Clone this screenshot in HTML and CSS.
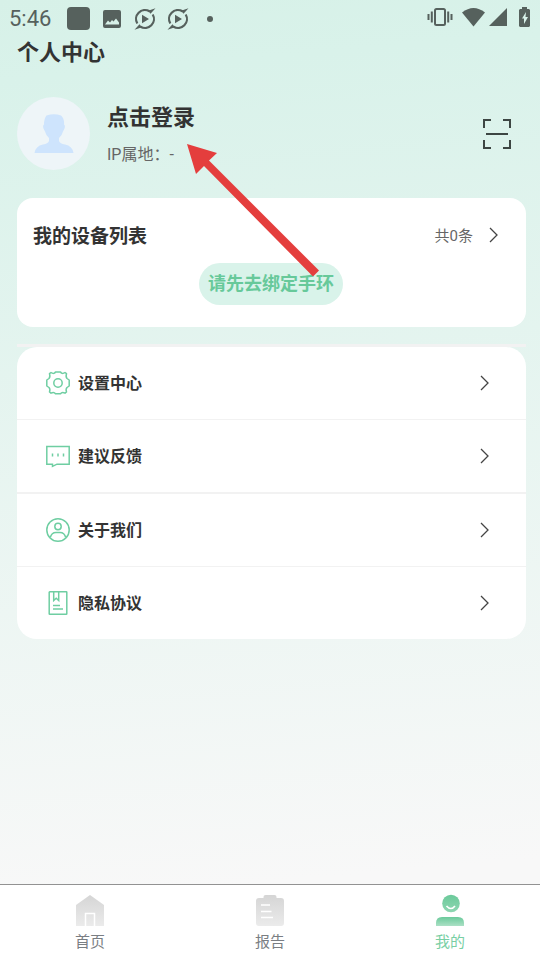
FILE: index.html
```html
<!DOCTYPE html>
<html lang="zh-CN">
<head>
<meta charset="utf-8">
<meta name="viewport" content="width=device-width, initial-scale=1">
<title>个人中心</title>
<link rel="stylesheet" href="styles.css">
</head>
<body>
<div class="status">
  <span class="clock">5:46</span>
  <span class="app-square"></span>
  <svg class="s-image" width="20" height="20" viewBox="0 0 20 20"><path fill="currentColor" fill-rule="evenodd" d="M3 1h14a2 2 0 0 1 2 2v14a2 2 0 0 1-2 2H3a2 2 0 0 1-2-2V3a2 2 0 0 1 2-2zM3 15.500h14v-2l-3-4-2.500 3-1.500-1.500-2 2.500-2-2z"/></svg>
  <svg class="s-play" width="22" height="22" viewBox="0 0 22 22"><path fill="none" stroke="currentColor" stroke-width="2.200" d="M3.300 15.500A8.900 8.900 0 0 1 15.500 3.300M18.700 6.500A8.900 8.900 0 0 1 6.500 18.700"/><path fill="currentColor" d="M8 6.800l7 4.200-7 4.200zM14 2.800l7.500-2.500-5 5.500zM8 19.200L.5 21.700l5-5.500z"/></svg>
  <svg class="s-play" width="22" height="22" viewBox="0 0 22 22"><path fill="none" stroke="currentColor" stroke-width="2.200" d="M3.300 15.500A8.900 8.900 0 0 1 15.500 3.300M18.700 6.500A8.900 8.900 0 0 1 6.500 18.700"/><path fill="currentColor" d="M8 6.800l7 4.200-7 4.200zM14 2.800l7.500-2.500-5 5.500zM8 19.200L.5 21.700l5-5.500z"/></svg>
  <span class="dot"></span>
  <span class="system">
    <svg width="26" height="20" viewBox="0 0 26 20"><rect x="8" y="2" width="10" height="16" rx="1.500" fill="none" stroke="currentColor" stroke-width="2"/><path d="M1.500 7v6M4.800 4.500v11M21.200 4.500v11M24.500 7v6" stroke="currentColor" stroke-width="2"/></svg>
    <svg class="wifi" width="23" height="20" viewBox="0 0 23 20"><path fill="currentColor" d="M0 5.500Q11.500-3.500 23 5.500L11.500 19.500z"/></svg>
    <svg width="19" height="20" viewBox="0 0 19 20"><path fill="currentColor" d="M19 1v18H1z"/></svg>
    <svg class="battery" width="11" height="20" viewBox="0 0 11 20"><path fill="currentColor" fill-rule="evenodd" d="M3 0h5v2h2l1 1v16l-1 1H1l-1-1V3l1-1h2zM7 5l-4 6.500h2V17l4-7H6.500z"/></svg>
  </span>
</div>
<main>
  <h1>个人中心</h1>
  <section class="profile">
    <span class="avatar"><svg width="40" height="40" viewBox="0 0 40 40"><path fill="#cee4fd" d="M12.500 1.500Q20-1 27 1.500q3.500 3 3 9 1.500 1 .5 4l-1.500 3q-1 4-4 6.500v3q1 2.500 6 3.500 7.500 1.500 8.500 8.500H.5q1-7 8.500-8.500 5-1 6-3.500v-3q-3-2.500-4-6.500l-1.500-3q-1-3 .5-4 0-6 2.500-9z"/></svg></span>
    <div class="who">
      <a class="login" href="#login">点击登录</a>
      <p>IP属地：-</p>
    </div>
    <button class="scan" type="button" aria-label="扫一扫"><svg width="28" height="30" viewBox="0 0 28 30"><path d="M1 9V1h7M20 1h7v8M27 21v8h-7M8 29H1v-8M3 15h22" fill="none" stroke="#3d4643" stroke-width="2"/></svg></button>
    <svg class="pointer" width="132" height="134" viewBox="0 0 132 134"><path fill="#e43e3d" d="M0 0l30 9-8 7.500L132 126.500l-6 6L17 22 9 30z"/></svg>
  </section>
  <section class="devices">
    <header>
      <h2>我的设备列表</h2>
      <a href="#devices">共0条<svg width="10" height="16" viewBox="0 0 10 16"><path class="chevron" d="M1 1l7 7-7 7"/></svg></a>
    </header>
    <button class="bind" type="button">请先去绑定手环</button>
  </section>
  <nav class="menu-wrap" aria-label="菜单">
    <ul class="menu">
      <li><a href="#settings">
        <svg class="icon" width="24" height="24" viewBox="0 0 24 24"><path d="M5 1.500q3 2 4.500-.5h5q1.500 2.500 4.500.5l1.500 1.200q-1 3.300.5 4.800l2.200 1.500v6L21 16.500q-1.500 1.500-.5 4.500l-1.500 1.200q-3-1.500-4.500.6h-5q-1.500-2.100-4.500-.6L3.500 21q1-3-.5-4.500L.8 15V9L3 7.500q1.500-1.500.5-4.800z" stroke-linejoin="round"/><circle cx="12" cy="12" r="4.200"/></svg>
        <span>设置中心</span><svg width="10" height="16" viewBox="0 0 10 16"><path class="chevron" d="M1 1l7 7-7 7"/></svg></a></li>
      <li><a href="#feedback">
        <svg class="icon" width="24" height="24" viewBox="0 0 24 24"><path d="M.8 2.500h22.400v17.700H11l-4.500 2.200v-2.200H.8zM6.500 9.500v3M12 9.500v3M17.500 9.500v3"/></svg>
        <span>建议反馈</span><svg width="10" height="16" viewBox="0 0 10 16"><path class="chevron" d="M1 1l7 7-7 7"/></svg></a></li>
      <li><a href="#about">
        <svg class="icon" width="24" height="24" viewBox="0 0 24 24"><circle cx="12" cy="12" r="11.200"/><circle cx="12" cy="8.500" r="3.200"/><path d="M4.300 19.500Q5.500 14.500 10 14.500h4q4.500 0 5.700 5"/></svg>
        <span>关于我们</span><svg width="10" height="16" viewBox="0 0 10 16"><path class="chevron" d="M1 1l7 7-7 7"/></svg></a></li>
      <li><a href="#privacy">
        <svg class="icon" width="24" height="24" viewBox="0 0 24 24"><rect x="3.200" y=".8" width="17.600" height="22.400" rx=".5"/><path d="M7.700 1v8.500l2.500-2.300 2.500 2.300V1M7 14.500h7M7 18h10"/></svg>
        <span>隐私协议</span><svg width="10" height="16" viewBox="0 0 10 16"><path class="chevron" d="M1 1l7 7-7 7"/></svg></a></li>
    </ul>
  </nav>
</main>
<nav class="tabs" aria-label="主导航">
  <a href="#home"><svg width="28" height="32" viewBox="0 0 28 32"><defs><linearGradient id="gray" x2="0" y2="1"><stop stop-color="#d5d5d5"/><stop offset="1" stop-color="#ebebeb"/></linearGradient><linearGradient id="green" gradientUnits="userSpaceOnUse" x1="0" y1="0" x2="0" y2="18"><stop stop-color="#69c999"/><stop offset="1" stop-color="#8ed6b1"/></linearGradient><linearGradient id="greenbody" x2="0" y2="1"><stop stop-color="#6bca9b"/><stop offset="1" stop-color="#abe0c5"/></linearGradient></defs><path fill="url(#gray)" d="M14 1l14 10v21H0V11z"/><path d="M9.500 32V19.500h9V32" fill="none" stroke="#fff" stroke-width="1.500"/></svg>首页</a>
  <a href="#report"><svg width="28" height="32" viewBox="0 0 28 32"><path fill="url(#gray)" d="M9.500 1h9a2 2 0 0 1 2 2v1H25a3 3 0 0 1 3 3v22a3 3 0 0 1-3 3H3a3 3 0 0 1-3-3V7a3 3 0 0 1 3-3h4.500V3a2 2 0 0 1 2-2z"/><path d="M5 11h9M5 17.500h10.500M5 23.500h12" stroke="#fff" stroke-width="1.500"/></svg>报告</a>
  <a class="active" href="#mine" aria-current="page"><svg width="28" height="32" viewBox="0 0 28 32"><circle cx="15" cy="9.500" r="8.800" fill="url(#green)"/><path d="M10.500 12q4.500 5 8.500 0" fill="none" stroke="#fff" stroke-width="1.700"/><path fill="url(#greenbody)" d="M6 23h16q6 0 6 6v3H0v-3q0-6 6-6z"/></svg>我的</a>
</nav>
</body>
</html>
```
FILE: styles.css
```css
* {
  box-sizing: border-box;
}

body {
  margin: 0;
  min-height: 100vh;
  display: flex;
  flex-direction: column;
  background: linear-gradient(175deg, #d7f1e8 0%, #d9f2ea 8%, #f8f8f8 90%);
  color: #333;
  font-family: Roboto, "Noto Sans CJK SC", sans-serif;
}

h1, h2, p, ul {
  margin: 0;
  padding: 0;
}

a {
  color: inherit;
  text-decoration: none;
}

button {
  border: 0;
  padding: 0;
  background: none;
  font: inherit;
}

svg {
  display: block;
  flex: none;
}

.status {
  display: flex;
  align-items: center;
  height: 37px;
  padding: 0 10px 0 9px;
  color: #56615d;
}

.clock {
  width: 58px;
  font-size: 22px;
}

.app-square {
  width: 23px;
  height: 23px;
  border-radius: 4px;
  background: currentColor;
}

.s-image {
  margin: 0 12px;
}

.s-image + .s-play {
  margin-right: 11px;
}

.dot {
  width: 6px;
  height: 6px;
  margin-left: 18px;
  border-radius: 50%;
  background: currentColor;
}

.system {
  display: flex;
  align-items: center;
  margin-left: auto;
  padding-bottom: 3px;
}

.wifi {
  margin: 0 3px 0 9px;
}

.battery {
  margin-left: 12px;
}

main {
  flex: 1;
  padding: 0 14px 0 17px;
}

h1 {
  font-size: 22px;
  font-weight: 700;
  line-height: 32px;
}

.profile {
  position: relative;
  display: flex;
  align-items: center;
  margin-top: 28px;
  height: 73px;
}

.avatar {
  display: grid;
  place-items: center;
  width: 73px;
  height: 73px;
  border-radius: 50%;
  background: #eef5f8;
}

.who {
  flex: 1;
  margin-left: 17px;
}

.login {
  display: block;
  font-size: 22px;
  font-weight: 700;
  line-height: 42px;
}

.who p {
  color: #666;
  font-size: 16px;
  line-height: 32px;
}

.scan {
  margin-right: 15px;
}

.pointer {
  position: absolute;
  left: 170px;
  top: 47px;
  z-index: 1;
  pointer-events: none;
}

.devices {
  margin-top: 28px;
  padding: 15px 17px 22px 16px;
  border-radius: 16px;
  background: #fff;
}

.devices header {
  display: flex;
  align-items: center;
  justify-content: space-between;
  height: 43px;
  padding-right: 10px;
}

h2 {
  font-size: 19px;
  font-weight: 700;
}

.devices header a {
  display: flex;
  align-items: center;
  gap: 16px;
  color: #666;
  font-size: 15px;
}

.bind {
  display: block;
  margin: 7px auto 0;
  height: 42px;
  padding: 0 9px 4px;
  border-radius: 21px;
  background: #d9f3ea;
  color: #67c99a;
  font-size: 18px;
  font-weight: 700;
}

.chevron {
  fill: none;
  stroke: #444;
  stroke-width: 1.3px;
}

.menu-wrap {
  margin-top: 17px;
  border-top: 3px solid #f2f2f2;
}

.menu {
  overflow: hidden;
  border-radius: 20px;
  background: #fff;
  list-style: none;
}

.menu li {
  border-bottom: 1px solid #f2f2f2;
}

.menu li:nth-child(2) {
  border-bottom-width: 2px;
}

.menu li:last-child {
  border-bottom: 0;
}

.menu a {
  display: flex;
  align-items: center;
  height: 72px;
  padding: 0 36px 0 29px;
  font-size: 16px;
  font-weight: 700;
}

.menu span {
  flex: 1;
  margin-left: 8px;
  padding-bottom: 2px;
}

.icon {
  fill: none;
  stroke: #6fcea2;
  stroke-width: 1.5px;
}

.tabs {
  display: flex;
  border-top: 1px solid #929292;
  background: #fff;
}

.tabs a {
  flex: 1;
  display: flex;
  flex-direction: column;
  align-items: center;
  height: 75px;
  padding-top: 9px;
  color: #7a7e83;
  font-size: 15px;
  line-height: 32px;
}

.tabs .active {
  color: #79cfa4;
}
```
